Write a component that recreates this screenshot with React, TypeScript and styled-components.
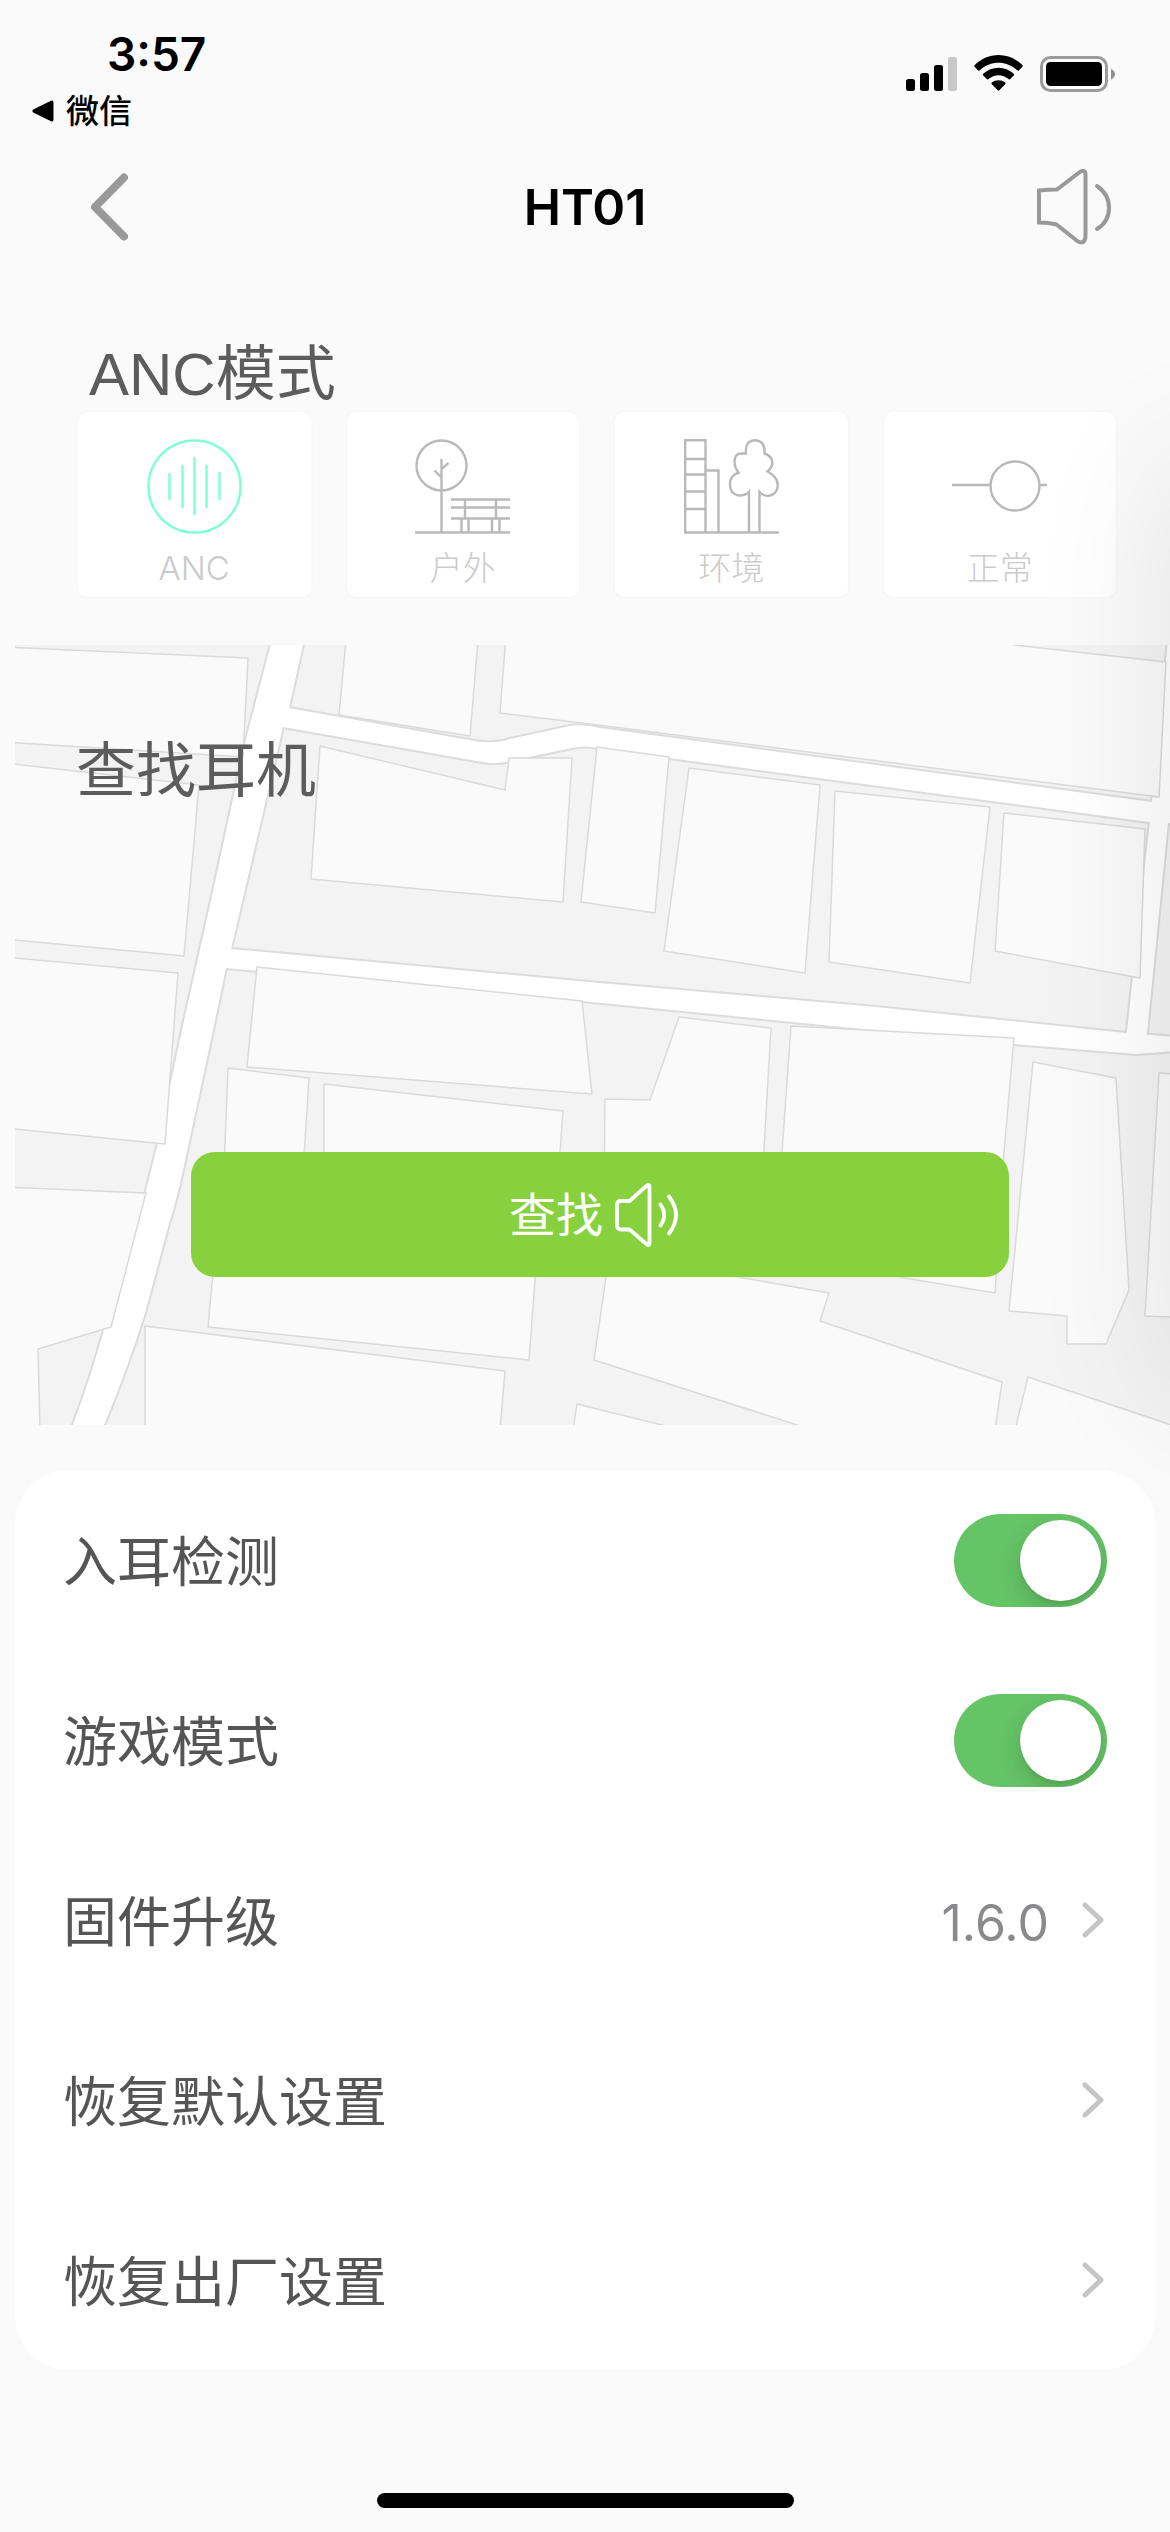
import React, { useState } from "react";
import styled, { createGlobalStyle } from "styled-components";

const latinFirst = `Inter, "Noto Sans CJK SC", sans-serif`;

const GlobalStyle = createGlobalStyle`
  * { box-sizing: border-box; }
  body { margin: 0; background: #fafafa; font-family: ${latinFirst}; }
  button { margin: 0; padding: 0; border: 0; background: none; font: inherit; color: inherit; cursor: pointer; }
  h1, h2, p, ul { margin: 0; padding: 0; font-weight: 400; }
  ul { list-style: none; }
  svg { display: block; flex: none; }
`;

const Page = styled.div`
  display: flex;
  flex-direction: column;
  min-height: 100vh;
  background: #fafafa;
  overflow: hidden;
`;

const StatusBar = styled.div`
  display: flex;
  justify-content: space-between;
  align-items: flex-start;
  height: 132px;
  padding: 24px 54px 0 32px;
  color: #000;
`;

const Clock = styled.p`
  padding-left: 75px;
  font-size: 46px;
  line-height: 60px;
  font-weight: 600;
`;

const ReturnButton = styled.button`
  display: flex;
  align-items: center;
  gap: 12px;
  padding-top: 7px;
  font-size: 33px;
  line-height: 40px;
  font-weight: 500;
`;

const StatusIcons = styled.div`
  display: flex;
  align-items: center;
  gap: 17px;
  padding-top: 31px;
`;

const Header = styled.header`
  display: grid;
  grid-template-columns: 1fr auto 1fr;
  align-items: center;
  height: 150px;
  padding: 0 58px;
`;

const BackButton = styled.button`
  justify-self: start;
  padding-left: 32px;
`;

const VolumeButton = styled.button`
  justify-self: end;
`;

const Title = styled.h1`
  font-size: 50px;
  line-height: 60px;
  font-weight: 600;
  color: #000;
`;

const Shaded = styled.div`
  position: relative;
  &::after {
    content: "";
    position: absolute;
    left: 100%;
    top: 180px;
    bottom: 20px;
    width: 200px;
    box-shadow: 0 0 140px rgba(0, 0, 0, 0.1);
    pointer-events: none;
  }
`;

const SectionTitle = styled.h2`
  font-size: 60px;
  line-height: 74px;
  color: #5c5c5c;
`;

const ModeSection = styled.section`
  padding: 56px 54px 48px 78px;
  ${SectionTitle} {
    padding-left: 11px;
    font-family: "Liberation Sans", "Noto Sans CJK SC", sans-serif;
  }
`;

const ModeGrid = styled.div`
  display: grid;
  grid-template-columns: repeat(4, 1fr);
  gap: 36px;
`;

const ModeCard = styled.button<{ $active: boolean }>`
  display: flex;
  flex-direction: column;
  align-items: center;
  gap: 14px;
  height: 185px;
  padding-top: 27px;
  border-radius: 10px;
  background: #fff;
  box-shadow: 0 0 0 2px #f8f8f8;
  color: ${(p) => (p.$active ? "#7fffd4" : "#b9b9b9")};
`;

const ModeLabel = styled.span`
  font-size: 33px;
  line-height: 40px;
  font-weight: 300;
  color: #cbcbcb;
`;

const FindSection = styled.section`
  position: relative;
  display: flex;
  flex-direction: column;
  justify-content: space-between;
  min-height: 780px;
  margin-left: 15px;
  padding: 88px 161px 148px 61px;
`;

const MapArt = styled.svg`
  position: absolute;
  inset: 0;
  width: 100%;
  height: 100%;
`;

const FindTitle = styled(SectionTitle)`
  position: relative;
`;

const FindButton = styled.button`
  position: relative;
  display: flex;
  justify-content: center;
  align-items: center;
  gap: 12px;
  height: 125px;
  margin-left: 115px;
  padding-right: 12px;
  border-radius: 24px;
  background: #87d13f;
  font-size: 47px;
  line-height: 60px;
  color: #fff;
`;

const Settings = styled.ul`
  margin: 45px 15px 0;
  border-radius: 54px;
  background: #fff;
  color: #555;
  font-size: 54px;
`;

const rowLayout = `
  display: flex;
  justify-content: space-between;
  align-items: center;
  width: 100%;
  height: 180px;
  padding: 0 48px;
`;

const SwitchRow = styled.label`
  ${rowLayout}
  cursor: pointer;
`;

const LinkRow = styled.button`
  ${rowLayout}
`;

const RowLabel = styled.span`
  padding-bottom: 4px;
`;

const RowEnd = styled.span`
  display: flex;
  align-items: center;
  gap: 33px;
`;

const RowValue = styled.span`
  padding-top: 6px;
  font-size: 50px;
  line-height: 60px;
  color: #8a8a8d;
`;

const Switch = styled.input`
  appearance: none;
  flex: none;
  width: 153px;
  height: 93px;
  margin: 0;
  padding: 6px;
  border-radius: 47px;
  background: #e9e9ea;
  overflow: hidden;
  cursor: pointer;
  &::before {
    content: "";
    display: block;
    width: 81px;
    height: 81px;
    border-radius: 50%;
    background: #fff;
    box-shadow: 0 9px 24px rgba(0, 0, 0, 0.15), 0 3px 3px rgba(0, 0, 0, 0.06);
  }
  &:checked {
    background: #65c466;
  }
  &:checked::before {
    margin-left: 60px;
  }
`;

const HomeBar = styled.div`
  width: 417px;
  height: 15px;
  margin: auto auto 24px;
  border-radius: 8px;
  background: #000;
`;

const SignalIcon = () => (
  <svg width="51" height="38" viewBox="0 0 51 38" aria-hidden="true">
    <rect x="0" y="24" width="9" height="12" rx="2.5" />
    <rect x="14" y="18" width="9" height="18" rx="2.5" />
    <rect x="28" y="10" width="9" height="26" rx="2.5" />
    <rect x="42" y="2" width="9" height="34" rx="2.5" fill="#c8c8c8" />
  </svg>
);

const WifiIcon = () => (
  <svg width="49" height="38" viewBox="0 0 49 38" aria-hidden="true">
    <path d="M0.6 10.2 C14 -3.4 35 -3.4 48.4 10.2 Q49.2 11 48.4 11.8 L44.8 15.4 Q44 16 43.2 15.3 C32.5 5.2 16.5 5.2 5.8 15.3 Q5 16 4.2 15.4 L0.6 11.8 Q-0.2 11 0.6 10.2Z" />
    <path d="M9.2 18.8 C17.8 10.8 31.2 10.8 39.8 18.8 Q40.6 19.6 39.8 20.4 L36 24.2 Q35.3 24.8 34.5 24.1 C28.6 19 20.4 19 14.5 24.1 Q13.7 24.8 13 24.2 L9.2 20.4 Q8.4 19.6 9.2 18.8Z" />
    <path d="M17.8 27.6 C21.6 24.6 27.4 24.6 31.2 27.6 Q32 28.4 31.2 29.2 L25.3 35.3 Q24.5 36 23.7 35.3 L17.8 29.2 Q17 28.4 17.8 27.6Z" />
  </svg>
);

const BatteryIcon = () => (
  <svg width="76" height="38" viewBox="0 0 76 38" aria-hidden="true">
    <rect x="1.5" y="2.5" width="65" height="33" rx="9" fill="#fff" stroke="#9b9b9b" strokeWidth="3" />
    <rect x="6" y="7" width="56" height="24" rx="4.5" />
    <path d="M71 14 Q75 16 75 19 Q75 22.5 71 24.5Z" fill="#8f8f8f" />
  </svg>
);

const BackIcon = () => (
  <svg width="38" height="68" viewBox="0 0 38 68" fill="none" stroke="#999" strokeWidth="8" strokeLinecap="round" strokeLinejoin="round" aria-hidden="true">
    <path d="M34 4.5 L5 34 L34 63.5" />
  </svg>
);

const VolumeIcon = () => (
  <svg width="76" height="76" viewBox="0 0 76 76" fill="none" stroke="#999" strokeWidth="4" strokeLinecap="round" aria-hidden="true">
    <path strokeLinecap="butt" d="M3 21.5 Q12 20.5 21 20.5 L44.5 2.5 Q49.5 0.5 49.5 5 V66 Q49.5 76 42 72.5 L20.5 55.5 Q13 53.5 3 53.5Z" />
    <path d="M61 17 C77 28 77 50 61 60" />
  </svg>
);

const FindIcon = () => (
  <svg width="64" height="64" viewBox="0 0 64 64" fill="none" stroke="#fff" strokeWidth="3.8" strokeLinecap="round" strokeLinejoin="round" aria-hidden="true">
    <path d="M2 22 Q2 18 6 18 H14.5 L32 2.5 Q34.5 1 34.5 4 V60 Q34.5 63 32 61.5 L14.5 46.5 H6 Q2 46.5 2 42.5Z" />
    <path d="M45.5 21.5 Q53 32 45.5 42.5 M54 13.5 Q68 32 54 50.5" />
  </svg>
);

const ChevronIcon = () => (
  <svg width="25" height="38" viewBox="0 0 25 38" fill="none" stroke="#c5c5c7" strokeWidth="5" strokeLinecap="round" strokeLinejoin="round" aria-hidden="true">
    <path d="M3 4 L19 19 L3 34" />
  </svg>
);

const modeArt: Record<string, React.ReactNode> = {
  anc: (
    <>
      <circle cx="47.5" cy="47.5" r="46" />
      <path strokeLinecap="round" d="M22.5 35V60 M35.5 27V68 M47.5 19V75 M59.5 27V68 M72.5 34V60" />
    </>
  ),
  outdoor: (
    <>
      <circle cx="26.5" cy="26.5" r="25" />
      <path d="M26.5 20V93.5 M33.5 24L26.5 30 M19.5 31.5L26.5 38.5 M0 93.5H95" />
      <path d="M36 60.5H95 M36 68.5H95 M36 79.5H95 M50 60.5V79 M81 60.5V79 M46.5 79V93 M53.5 79V93 M77 79V93 M84.5 79V93" />
    </>
  ),
  ambient: (
    <>
      <path d="M1.2 94V1.2H21.5V94 M1.2 20H21.5 M1.2 35.5H21.5 M1.2 52.5H21.5 M1.2 70H21.5 M21.5 31.5H34.5V94 M0 93.5H95" />
      <path d="M65 93.5V53 C61 57.5 46 60 46 45 C46 40 49 35.5 54.5 33.5 C48 25 50 14.5 57 14.5 H62 C61 5 65 1.2 71 1.2 C77 1.2 81 5 80.5 14.5 C88 17 92 25 83.5 32.5 C89 35.5 93.8 40 93.8 46 C93.5 57 82 60 75.5 53 V93.5" />
    </>
  ),
  normal: (
    <>
      <circle cx="63" cy="47" r="24.5" />
      <path d="M0 46H38.5 M87.5 46H95" />
    </>
  ),
};

const ModeIcon = ({ kind }: { kind: string }) => (
  <svg width="95" height="95" viewBox="0 0 95 95" fill="none" stroke="currentColor" strokeWidth="2.4" aria-hidden="true">
    {modeArt[kind]}
  </svg>
);

const roads = [
  "M1152 802 L1168 640 H1190 V823 H1168 L1147 1033 L1140 1050 L1126 1040Z",
  "M280 706 L289 708 L469 740 Q492 745 510 739 L570 726 Q582 724 600 728 L1152 802 H1190 V824 L1149 822 L669 758 L597 748 Q585 745 572 748 L505 762 Q494 765 471 760 L283 727 L270 724Z",
  "M221 948 L231 949 L600 983 L876 1007 L1126 1033 L1190 1038 V1050 L1136 1054 L1014 1044 L582 1001 L226 968 L216 967Z",
  "M272 640 L245 743 L214 887 L182 1030 L158 1143 L145 1195 L126 1268 L104 1330 Q90 1380 71 1430 H102 Q126 1373 145 1313 L168 1227 Q178 1195 183 1170 L213 1030 L226 968 L231 949 L283 727 L289 708 L304 640Z",
];

const blocks = [
  "5,647 248,658 243,757 5,742",
  "5,763 199,785 184,956 5,939",
  "5,957 178,973 165,1144 5,1128",
  "5,1187 146,1193 111,1327 38,1349 40,1430 5,1430",
  "346,640 339,715 470,736 478,640",
  "506,635 500,713 582,723 1159,797 1166,662 1014,645 980,635",
  "320,746 505,790 509,758 572,758 563,902 311,879",
  "597,747 669,757 655,913 581,902",
  "689,768 820,785 805,973 664,951",
  "835,791 990,807 970,983 829,962",
  "1004,813 1145,829 1140,978 995,951",
  "257,967 582,1001 592,1094 247,1067",
  "228,1068 309,1078 300,1220 222,1220",
  "324,1084 563,1111 555,1220 324,1220",
  "216,1240 538,1240 529,1360 208,1327",
  "145,1326 505,1371 500,1430 145,1430",
  "679,1017 771,1028 761,1200 604,1200 605,1099 650,1100",
  "791,1026 1014,1038 1004,1152 995,1293 899,1277 775,1250",
  "1033,1062 1116,1078 1129,1290 1106,1344 1067,1344 1067,1316 1009,1311",
  "1159,1073 1190,1075 1190,1318 1145,1316",
  "610,1250 738,1277 829,1293 820,1321 1002,1382 995,1430 813,1430 594,1360",
  "577,1404 670,1427 573,1430",
  "1028,1377 1180,1428 1015,1430",
];

const StreetMap = () => (
  <MapArt viewBox="15 645 1155 780" preserveAspectRatio="xMinYMin slice" aria-hidden="true">
    <rect x="15" y="645" width="1155" height="780" fill="#f3f3f3" />
    <g fill="none" strokeLinejoin="round">
      {/* outlines first, then plain fills, so that crossings stay open */}
      <g stroke="#dcdcdc" strokeWidth="4">
        {roads.map((d) => (
          <path key={d} d={d} />
        ))}
      </g>
      <g fill="#fff">
        {roads.map((d) => (
          <path key={d} d={d} />
        ))}
      </g>
      <g fill="#fafafa" stroke="#dadada" strokeWidth="1.5">
        {blocks.map((points) => (
          <polygon key={points} points={points} />
        ))}
      </g>
    </g>
  </MapArt>
);

const modes = [
  { id: "anc", label: "ANC" },
  { id: "outdoor", label: "户外" },
  { id: "ambient", label: "环境" },
  { id: "normal", label: "正常" },
];

const switches = ["入耳检测", "游戏模式"];

const links = [
  { label: "固件升级", value: "1.6.0" },
  { label: "恢复默认设置" },
  { label: "恢复出厂设置" },
];

export default function App() {
  const [mode, setMode] = useState("anc");

  return (
    <Page>
      <GlobalStyle />
      <StatusBar>
        <div>
          <Clock>3:57</Clock>
          <ReturnButton type="button">
            <svg width="22" height="22" viewBox="0 0 22 22" aria-hidden="true">
              <path d="M1.2 9.5 L19 0.8 Q21.5 0 21.5 2.5 V19.5 Q21.5 22 19 21.2 L1.2 12.5 Q-0.5 11 1.2 9.5Z" />
            </svg>
            微信
          </ReturnButton>
        </div>
        <StatusIcons>
          <SignalIcon />
          <WifiIcon />
          <BatteryIcon />
        </StatusIcons>
      </StatusBar>

      <Header>
        <BackButton type="button" aria-label="返回">
          <BackIcon />
        </BackButton>
        <Title>HT01</Title>
        <VolumeButton type="button" aria-label="音量">
          <VolumeIcon />
        </VolumeButton>
      </Header>

      <Shaded>
        <ModeSection>
          <SectionTitle>ANC模式</SectionTitle>
          <ModeGrid>
            {modes.map(({ id, label }) => (
              <ModeCard key={id} type="button" $active={mode === id} aria-pressed={mode === id} onClick={() => setMode(id)}>
                <ModeIcon kind={id} />
                <ModeLabel>{label}</ModeLabel>
              </ModeCard>
            ))}
          </ModeGrid>
        </ModeSection>

        <FindSection>
          <StreetMap />
          <FindTitle>查找耳机</FindTitle>
          <FindButton type="button">
            查找
            <FindIcon />
          </FindButton>
        </FindSection>
      </Shaded>

      <Settings>
        {switches.map((label) => (
          <li key={label}>
            <SwitchRow>
              <RowLabel>{label}</RowLabel>
              <Switch type="checkbox" role="switch" defaultChecked />
            </SwitchRow>
          </li>
        ))}
        {links.map(({ label, value }) => (
          <li key={label}>
            <LinkRow type="button">
              <RowLabel>{label}</RowLabel>
              <RowEnd>
                {value && <RowValue>{value}</RowValue>}
                <ChevronIcon />
              </RowEnd>
            </LinkRow>
          </li>
        ))}
      </Settings>
      <HomeBar />
    </Page>
  );
}
